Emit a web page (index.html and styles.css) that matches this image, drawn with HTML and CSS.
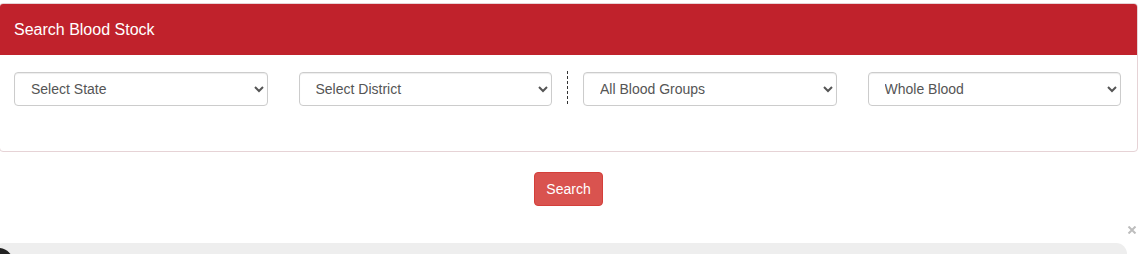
FILE: index.html
```html
<!DOCTYPE html>
<html lang="en">
<head>
  <meta charset="UTF-8" />
  <meta name="viewport" content="width=device-width, initial-scale=1.0"/>
  <title>Blood Stock</title>
  <link rel="stylesheet" href="styles.css">
</head>
<body>
  <div class="page">
    <div class="panel">
      <div class="panel-heading">Search Blood Stock</div>
      <div class="panel-body">
        <div class="filters">
          <div class="field">
            <select class="form-control" id="state">
              <option>Select State</option>
            </select>
          </div>
          <div class="field">
            <select class="form-control" id="district">
              <option>Select District</option>
            </select>
          </div>
          <div class="field field-split">
            <select class="form-control" id="bloodGroup">
              <option>All Blood Groups</option>
            </select>
          </div>
          <div class="field">
            <select class="form-control" id="component">
              <option>Whole Blood</option>
            </select>
          </div>
        </div>
      </div>
    </div>

    <div class="actions">
      <button class="btn-search" type="button">Search</button>
    </div>

    <div class="notice">
      <span class="notice-close">
        <svg width="10" height="8" viewBox="0 0 10 8">
          <path d="M1.5 0.5 L8.5 7.5 M8.5 0.5 L1.5 7.5" stroke="#bdbdbd" stroke-width="2" fill="none"/>
        </svg>
      </span>
      <div class="notice-bar">
        <span class="avatar"></span>
      </div>
    </div>
  </div>
</body>
</html>
```

FILE: styles.css
```css
html, body {
  margin: 0;
  padding: 0;
  height: 254px;
  overflow: hidden;
  background: #fff;
}

body {
  font-family: "Liberation Sans", Arial, sans-serif;
  font-size: 14px;
  color: #333;
}

.page {
  width: 1137px;
}

.panel {
  width: 1139px;
  box-sizing: border-box;
  margin: 3px 0 0 -1px;
  border: 1px solid #e6d3d6;
  border-radius: 4px;
  background: #fff;
  overflow: hidden;
}

.panel-heading {
  height: 51px;
  display: flex;
  align-items: center;
  padding-left: 14px;
  background: #c0222c;
  color: #fff;
  font-size: 16px;
}

.panel-body {
  padding: 17px 16px 45px 14px;
}

.filters {
  display: grid;
  grid-template-columns: repeat(4, 1fr);
  column-gap: 31px;
}

.field {
  position: relative;
}

.field-split::before {
  content: "";
  position: absolute;
  left: -16px;
  top: -1px;
  width: 1px;
  height: 35px;
  background: repeating-linear-gradient(to bottom, #333 0 3px, transparent 3px 5px);
}

.form-control {
  display: block;
  width: 100%;
  height: 34px;
  box-sizing: border-box;
  padding: 6px 12px;
  font-family: "Liberation Sans", Arial, sans-serif;
  font-size: 14px;
  color: #555;
  background: #fff;
  border: 1px solid #ccc;
  border-radius: 4px;
  box-shadow: inset 0 1px 1px rgba(0, 0, 0, 0.075);
}

.actions {
  display: flex;
  justify-content: center;
  margin-top: 20px;
}

.btn-search {
  height: 34px;
  padding: 6px 11px;
  font-family: "Liberation Sans", Arial, sans-serif;
  font-size: 14px;
  color: #fff;
  background: #d9534f;
  border: 1px solid #d43f3a;
  border-radius: 4px;
}

.notice {
  position: relative;
  padding-top: 37px;
}

.notice-close {
  position: absolute;
  top: 20px;
  right: 0;
  width: 10px;
  height: 8px;
  line-height: 0;
}

.notice-bar {
  position: relative;
  margin-left: -8px;
  width: 1135px;
  height: 11px;
  overflow: hidden;
  background: #eee;
  border-radius: 18px 18px 0 0;
}

.avatar {
  position: absolute;
  left: -10px;
  top: 5px;
  width: 32px;
  height: 32px;
  border-radius: 50%;
  background: #222;
}
```
